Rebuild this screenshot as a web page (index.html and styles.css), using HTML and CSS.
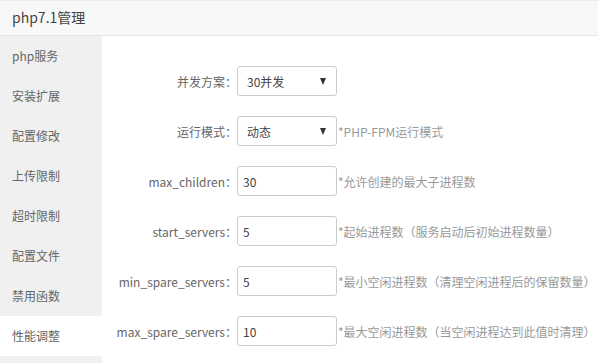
FILE: index.html
```html
<!DOCTYPE html>
<html lang="zh-CN">
<head>
<meta charset="utf-8">
<title>php7.1管理</title>
<link rel="stylesheet" href="styles.css">
</head>
<body>
<div class="panel">
  <div class="header">php7.1管理</div>
  <div class="main">
    <ul class="sidebar">
      <li class="nav-item">php服务</li>
      <li class="nav-item">安装扩展</li>
      <li class="nav-item">配置修改</li>
      <li class="nav-item">上传限制</li>
      <li class="nav-item">超时限制</li>
      <li class="nav-item">配置文件</li>
      <li class="nav-item">禁用函数</li>
      <li class="nav-item active">性能调整</li>
      <li class="nav-item"></li>
    </ul>
    <div class="content">
      <div class="row">
        <span class="label">并发方案：</span>
        <div class="select"><span class="select-text">30并发</span><span class="caret"></span></div>
      </div>
      <div class="row">
        <span class="label">运行模式：</span>
        <div class="select"><span class="select-text">动态</span><span class="caret"></span></div>
        <span class="hint">*PHP-FPM运行模式</span>
      </div>
      <div class="row">
        <span class="label">max_children：</span>
        <div class="input">30</div>
        <span class="hint">*允许创建的最大子进程数</span>
      </div>
      <div class="row">
        <span class="label">start_servers：</span>
        <div class="input">5</div>
        <span class="hint">*起始进程数（服务启动后初始进程数量）</span>
      </div>
      <div class="row">
        <span class="label">min_spare_servers：</span>
        <div class="input">5</div>
        <span class="hint">*最小空闲进程数（清理空闲进程后的保留数量）</span>
      </div>
      <div class="row">
        <span class="label">max_spare_servers：</span>
        <div class="input">10</div>
        <span class="hint">*最大空闲进程数（当空闲进程达到此值时清理）</span>
      </div>
    </div>
  </div>
</div>
</body>
</html>
```

FILE: styles.css
```css
* { box-sizing: border-box; }
html, body {
  margin: 0;
  padding: 0;
  background: #fff;
  font-family: "Noto Sans CJK SC", "Noto Sans", sans-serif;
  color: #666;
  font-size: 12px;
}
.panel {
  width: 598px;
  height: 363px;
  overflow: hidden;
  display: flex;
  flex-direction: column;
}
.header {
  height: 36px;
  flex: none;
  background: #f8f8f8;
  border-top: 1px solid #ececec;
  border-bottom: 1px solid #e6e6e6;
  padding-left: 12px;
  font-size: 14px;
  line-height: 33px;
  color: #444;
}
.main {
  flex: 1;
  display: flex;
  min-height: 0;
}
.sidebar {
  list-style: none;
  margin: 0;
  padding: 0;
  width: 102px;
  flex: none;
  background: #f0f0f0;
}
.nav-item {
  height: 40px;
  line-height: 40px;
  padding-left: 12px;
  color: #666;
}
.nav-item.active {
  background: #fff;
}
.content {
  flex: 1;
  padding-top: 30px;
  display: flex;
  flex-direction: column;
  gap: 20px;
}
.row {
  display: flex;
  align-items: center;
  height: 30px;
}
.label {
  width: 135px;
  text-align: right;
  color: #666;
  flex: none;
}
.select, .input {
  width: 100px;
  height: 30px;
  border: 1px solid #ccc;
  border-radius: 3px;
  display: flex;
  align-items: center;
  padding: 0 10px 0 5px;
  color: #444;
  flex: none;
}
.select { padding-left: 9px; }
.select-text { flex: 1; }
.caret {
  width: 0;
  height: 0;
  border-left: 3.5px solid transparent;
  border-right: 3.5px solid transparent;
  border-top: 7px solid #333;
}
.hint {
  color: #999;
  margin-left: 1px;
  white-space: nowrap;
}
```
